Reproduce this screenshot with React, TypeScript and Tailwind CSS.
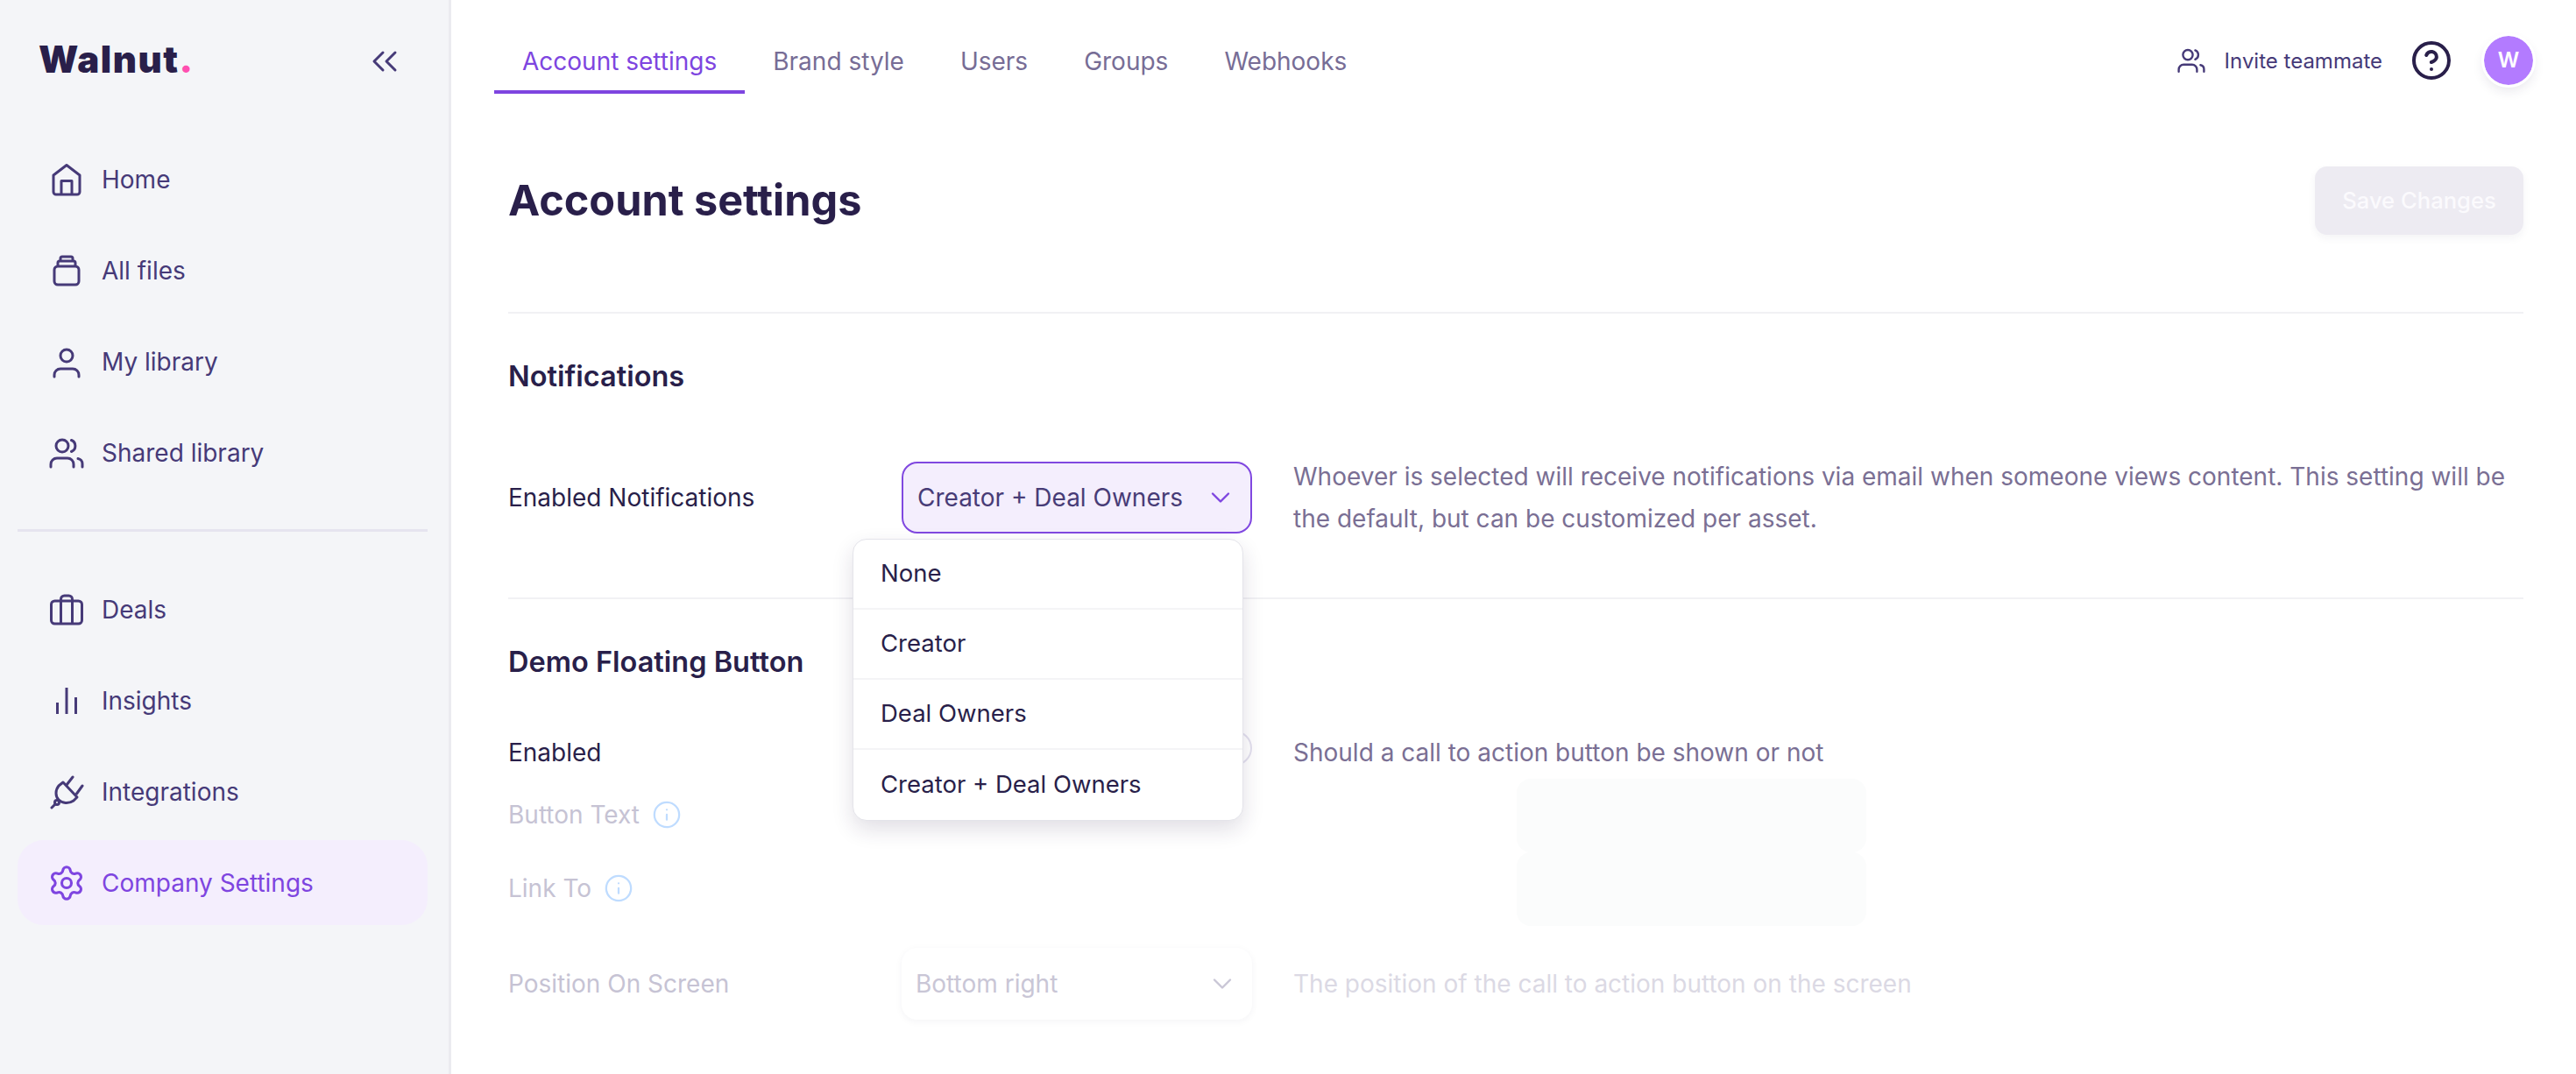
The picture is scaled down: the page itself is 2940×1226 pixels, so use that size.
import { ChevronDown, ChevronsLeft, CircleHelp, Info, Settings } from "lucide-react";
import type { ReactNode } from "react";

type IconProps = { className?: string };

function HomeIcon({ className }: IconProps) {
  return (
    <svg viewBox="0 0 40 40" fill="none" stroke="currentColor" strokeWidth={3} strokeLinejoin="round" className={className}>
      <path d="M5 15 20 3.5 35 15v19a3 3 0 0 1-3 3H8a3 3 0 0 1-3-3Z" />
      <path d="M14 37V21.5h12V37" />
    </svg>
  );
}

function FilesIcon({ className }: IconProps) {
  return (
    <svg viewBox="0 0 40 40" fill="none" stroke="currentColor" strokeWidth={3} className={className}>
      <rect x="6" y="15" width="28" height="21" rx="4" />
      <path d="M10 15v-4q0-2 2-2h16q2 0 2 2v4" />
      <path d="M13 9V6q0-2 2-2h10q2 0 2 2v3" />
    </svg>
  );
}

function UserIcon({ className }: IconProps) {
  return (
    <svg viewBox="0 0 40 40" fill="none" stroke="currentColor" strokeWidth={3} strokeLinecap="round" className={className}>
      <circle cx="20" cy="13" r="7" />
      <path d="M6 37v-2a7 7 0 0 1 7-7h14a7 7 0 0 1 7 7v2" />
    </svg>
  );
}

function UsersIcon({ className }: IconProps) {
  return (
    <svg viewBox="0 0 40 40" fill="none" stroke="currentColor" strokeWidth={3} strokeLinecap="round" className={className}>
      <circle cx="15" cy="12" r="7" />
      <path d="M25.5 5.5a7 7 0 0 1 0 13" />
      <path d="M2 36v-3a7 7 0 0 1 7-7h12a7 7 0 0 1 7 7v3" />
      <path d="M33 26.5a6 6 0 0 1 5 6V36" />
    </svg>
  );
}

function DealsIcon({ className }: IconProps) {
  return (
    <svg viewBox="0 0 40 40" fill="none" stroke="currentColor" strokeWidth={3} className={className}>
      <rect x="2.5" y="10" width="35" height="26" rx="4" />
      <path d="M13.5 36V8a4 4 0 0 1 4-4h5a4 4 0 0 1 4 4v28" />
    </svg>
  );
}

function InsightsIcon({ className }: IconProps) {
  return (
    <svg viewBox="0 0 40 40" fill="none" stroke="currentColor" strokeWidth={3} className={className}>
      <path d="M9.5 22v13M20 5v30M30.5 16v19" />
    </svg>
  );
}

function PlugIcon({ className }: IconProps) {
  return (
    <svg viewBox="0 0 40 40" fill="none" stroke="currentColor" strokeWidth={3} strokeLinecap="round" strokeLinejoin="round" className={className}>
      <path d="M16 9 32 26l-4 4c-6 4-13 3-17-1s-4-11 0-16Z" />
      <path d="M20 12l7-9M31.5 22l6.5-9" />
      <circle cx="9" cy="32" r="2.5" />
      <path d="M7 34l-4 4" />
    </svg>
  );
}

const navTop = [
  { label: "Home", icon: <HomeIcon className="w-10 h-10" /> },
  { label: "All files", icon: <FilesIcon className="w-10 h-10" /> },
  { label: "My library", icon: <UserIcon className="w-10 h-10" /> },
  { label: "Shared library", icon: <UsersIcon className="w-10 h-10" /> },
];

const navBottom = [
  { label: "Deals", icon: <DealsIcon className="w-10 h-10" /> },
  { label: "Insights", icon: <InsightsIcon className="w-10 h-10" /> },
  { label: "Integrations", icon: <PlugIcon className="w-10 h-10" /> },
];

function NavItem({ label, icon, active }: { label: string; icon: ReactNode; active?: boolean }) {
  return (
    <div
      className={
        active
          ? "flex items-center h-[97px] pl-[36px] gap-[20px] rounded-[30px] bg-[#f4eefd] text-[#7e45e0]"
          : "flex items-center h-[97px] pl-[36px] gap-[20px] text-[#463a78]"
      }
    >
      {icon}
      <span className="text-[28px]">{label}</span>
    </div>
  );
}

function Sidebar() {
  return (
    <aside className="w-[515px] shrink-0 flex flex-col pl-[20px] pr-[24px] bg-[#f4f5f8] border-r-[3px] border-[#ebebf0]">
      <div className="h-[156px] shrink-0 flex items-start justify-between pt-[38px] pl-[24px] pr-[22px]">
        <div className="text-[#291f4a] text-[42px] leading-[60px] font-black tracking-[1.5px]">
          Walnut<span className="text-[#ff4fb0]">.</span>
        </div>
        <ChevronsLeft size={48} strokeWidth={1.5} className="text-[#463a78] mt-[-14px] mr-[3px] translate-y-[22px]" />
      </div>
      <nav className="flex flex-col gap-[7px]">
        {navTop.map((item) => (
          <NavItem key={item.label} {...item} />
        ))}
      </nav>
      <div className="h-[3px] bg-[#e6e4ef] mt-[39px] mb-[40px]" />
      <nav className="flex flex-col gap-[7px]">
        {navBottom.map((item) => (
          <NavItem key={item.label} {...item} />
        ))}
        <NavItem
          label="Company Settings"
          icon={<Settings size={44} strokeWidth={1.7} className="-mx-[2px]" />}
          active
        />
      </nav>
    </aside>
  );
}

function Tab({ label, active }: { label: string; active?: boolean }) {
  return (
    <div
      className={
        active
          ? "h-[107px] px-[32px] pt-[50px] leading-[40px] text-[28px] text-[#7e45e0] border-b-4 border-[#7e45e0]"
          : "h-[107px] px-[32px] pt-[50px] leading-[40px] text-[28px] text-[#776d96]"
      }
    >
      {label}
    </div>
  );
}

function TopBar() {
  return (
    <header className="h-[107px] shrink-0 flex pl-[49px] pr-[49px]">
      <Tab label="Account settings" active />
      <Tab label="Brand style" />
      <Tab label="Users" />
      <Tab label="Groups" />
      <Tab label="Webhooks" />
      <div className="ml-auto mt-[41px] h-[56px] flex items-center text-[#463a78]">
        <UsersIcon className="w-8 h-8" />
        <span className="ml-[22px] text-[24px] translate-y-[1px]">Invite teammate</span>
        <CircleHelp size={48} strokeWidth={2} className="ml-[32px] text-[#291f4a]" />
        <div className="ml-[36px] w-[56px] h-[56px] rounded-full bg-[#b37bff] flex items-center justify-center text-white text-[24px] font-semibold outline-[3px] outline-white shadow-[0_6px_14px_rgba(40,30,70,0.12)]">
          W
        </div>
      </div>
    </header>
  );
}

function SelectBox({ label, open, faded }: { label: string; open?: boolean; faded?: boolean }) {
  let cls = "w-[400px] h-[82px] flex items-center justify-between pl-[16px] pr-[16px] rounded-[18px] text-[28px]";
  if (open) cls += " border-2 border-[#8048e0] bg-[#f4eefd] text-[#483c77]";
  if (faded) cls += " bg-white text-[#c9c6d6] shadow-[0_2px_8px_rgba(40,30,70,0.05)]";
  return (
    <div className={cls}>
      <span>{label}</span>
      <ChevronDown size={36} strokeWidth={1.6} className={open ? "text-[#7e45e0]" : "text-[#c9c6d6]"} />
    </div>
  );
}

const options = ["None", "Creator", "Deal Owners", "Creator + Deal Owners"];

function OptionsMenu() {
  return (
    <div className="absolute z-10 left-[-56px] top-[88px] w-[446px] bg-white border border-[#e4e4ea] rounded-[16px] overflow-hidden shadow-[0_10px_24px_rgba(40,30,70,0.14)]">
      {options.map((option, i) => (
        <div
          key={option}
          className={
            i < options.length - 1
              ? "h-[80px] flex items-center pl-[31px] text-[27.5px] text-[#291f4a] border-b-2 border-[#f4f4f6]"
              : "h-[80px] flex items-center pl-[31px] text-[27.5px] text-[#291f4a]"
          }
        >
          {option}
        </div>
      ))}
    </div>
  );
}

function FadedLabel({ label }: { label: string }) {
  return (
    <div className="w-[1151px] flex items-center gap-[14px] pb-[2px] text-[28px] text-[#c6c3d4]">
      {label}
      <Info size={34} strokeWidth={1.6} className="text-[#bfdcff]" />
    </div>
  );
}

export default function App() {
  return (
    <div className="flex min-h-screen w-full bg-white overflow-hidden [font-family:Inter,sans-serif]">
      <Sidebar />
      <main className="flex-1 flex flex-col min-w-0">
        <TopBar />
        <div className="pl-[65px] pr-[60px]">
          <div className="mt-[83px] h-[78px] flex items-center justify-between">
            <h1 className="text-[48.6px] font-bold text-[#291f4a]">Account settings</h1>
            <div className="w-[238px] h-[78px] rounded-[14px] bg-[#edebf2] flex items-center justify-center text-[#fbfafd] text-[25.6px] font-medium shadow-[0_4px_10px_rgba(40,30,70,0.05)]">
              Save Changes
            </div>
          </div>
          <div className="mt-[88px] h-[2px] bg-[#f1f1f4]" />

          <h2 className="mt-[52px] h-[40px] leading-[40px] text-[32.5px] font-semibold text-[#291f4a]">Notifications</h2>
          <div className="mt-[70px] flex items-center">
            <div className="w-[449px] text-[28px] text-[#291f4a]">Enabled Notifications</div>
            <div className="relative">
              <SelectBox label="Creator + Deal Owners" open />
              <OptionsMenu />
            </div>
            <p className="ml-[47px] text-[28px] leading-[48px] text-[#7a6f94] whitespace-nowrap">
              Whoever is selected will receive notifications via email when someone views content. This setting will be
              <br />
              the default, but can be customized per asset.
            </p>
          </div>
          <div className="mt-[66px] h-[2px] bg-[#f1f1f4]" />

          <h2 className="mt-[52px] h-[40px] leading-[40px] text-[32.5px] font-semibold text-[#291f4a]">Demo Floating Button</h2>
          <div className="mt-[58px] h-[50px] flex items-center">
            <div className="w-[449px] text-[28px] text-[#291f4a]">Enabled</div>
            <div className="w-[400px] self-start flex justify-end">
              <div className="w-[80px] h-[40px] rounded-full border-2 border-[#e3e0ee]" />
            </div>
            <p className="ml-[47px] text-[28px] text-[#7a6f94]">Should a call to action button be shown or not</p>
          </div>
          <div className="mt-[5px] h-[84px] flex">
            <FadedLabel label="Button Text" />
            <div className="w-[399px] rounded-[16px] bg-[#fbfcfc]" />
          </div>
          <div className="h-[84px] flex">
            <FadedLabel label="Link To" />
            <div className="w-[399px] rounded-[16px] bg-[#fbfcfc]" />
          </div>
          <div className="mt-[25px] flex items-center">
            <div className="w-[449px] text-[28px] text-[#c6c3d4]">Position On Screen</div>
            <SelectBox label="Bottom right" faded />
            <p className="ml-[47px] text-[28px] text-[#dbd9e4]">The position of the call to action button on the screen</p>
          </div>
        </div>
      </main>
    </div>
  );
}
